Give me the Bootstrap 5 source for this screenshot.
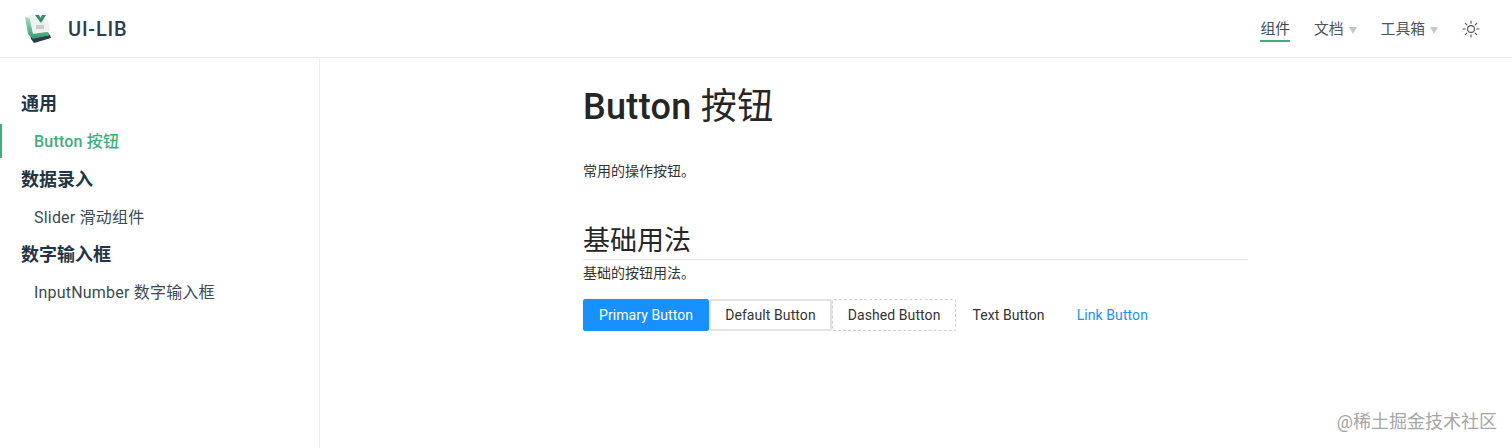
<!doctype html>
<html lang="zh">
<head>
<meta charset="utf-8">
<title>UI-LIB</title>
<link href="https://cdn.jsdelivr.net/npm/bootstrap@5.3.0/dist/css/bootstrap.min.css" rel="stylesheet">
<style>
html,body{height:448px;overflow:hidden;background:#fff;}
body{font-family:Roboto,"Noto Sans CJK SC",sans-serif;color:#213547;position:relative;}
.topbar{height:58px;border-bottom:1px solid #eeeeee;padding:0 32px 0 24px;}
.brand-name{font-size:20px;font-weight:500;color:#2c3e50;margin-left:16px;letter-spacing:.8px;}
.menu-item{font-size:14.8px;color:#4a5560;height:26px;line-height:24px;padding-top:1px;}
.menu-active{border-bottom:2px solid #3eaf7c;color:#3c4a55;}
.caret{display:inline-block;width:0;height:0;border-left:4.5px solid transparent;border-right:4.5px solid transparent;border-top:7px solid #c4c7ca;margin-left:5px;vertical-align:0;}
.shell{height:390px;}
.side{width:320px;border-right:1px solid #eeeeee;padding-top:28px;flex:none;letter-spacing:.2px;}
.side-head{font-size:18px;font-weight:700;height:38px;line-height:36px;padding-left:21px;color:#213547;letter-spacing:0;}
.side-link{font-size:16px;height:37px;line-height:36px;padding-left:34px;color:#3c4a55;}
.side-on{color:#3eaf7c;font-weight:500;box-shadow:inset 2px 0 0 #3eaf7c;height:34px;line-height:36px;margin-bottom:4px;}
.doc{width:665px;margin-left:263px;color:#262626;}
.doc-title{font-size:36px;font-weight:500;line-height:44px;margin:27px 0 0;color:#262626;letter-spacing:.3px;}
.doc-title-cjk{font-weight:400;}
.doc-lead{font-size:14px;line-height:22px;margin:31px 0 0;color:#333;}
.doc-sub{font-size:27px;font-weight:400;line-height:38px;margin:40px 0 0;height:38px;border-bottom:1px solid #e6e6e6;color:#262626;}
.doc-note{font-size:14px;line-height:22px;margin:2px 0 0;color:#333;}
.btn-row{margin-top:15px;}
.demo-btn{font-size:14px;height:32px;line-height:30px;padding:0 15px;border:1px solid transparent;border-radius:2px;background:transparent;color:#333;white-space:nowrap;letter-spacing:.08px;}
.demo-primary{background:#1890ff;border-color:#1890ff;color:#fff;}
.demo-default{background:#fff;border:2px solid #e2e2e2;border-radius:2px;line-height:28px;padding:0 14px;}
.demo-dashed{background:#fff;border:1px dashed #cfcfcf;}
.demo-link{color:#1890ff;}
.stamp{position:absolute;right:15px;bottom:14px;font-size:18px;line-height:24px;color:#a6a6a6;}
</style>
</head>
<body>
<header class="topbar d-flex align-items-center justify-content-between">
  <div class="d-flex align-items-center">
    <svg width="28" height="30" viewBox="0 0 28 30" aria-hidden="true">
      <defs>
        <linearGradient id="bookEdge" x1="0" y1="0" x2="0" y2="1">
          <stop offset="0" stop-color="#a8e0c4"/>
          <stop offset="1" stop-color="#2f9a6c"/>
        </linearGradient>
      </defs>
      <path d="M3 6 L7 25 L10 29 L27 24 L26 21 L9 24 Z" fill="#2b3a4d"/>
      <path d="M1 3 L4 20 L9 25 L26 21 L24 18 L9 19 L6 4 Z" fill="url(#bookEdge)"/>
      <path d="M5 1 L9 20 L26 17 L24 6 L17 1 Z" fill="#eef1ef"/>
      <path d="M11 1 L15 1 L16.5 4 L18 1 L22 1 L17 9 Z" fill="#2f8f68"/>
      <rect x="12" y="11" width="8" height="4" fill="#c6cdc9"/>
    </svg>
    <span class="brand-name">UI-LIB</span>
  </div>
  <nav class="d-flex align-items-center">
    <span class="menu-item menu-active">组件</span>
    <span class="menu-item ms-4">文档<i class="caret"></i></span>
    <span class="menu-item ms-4">工具箱<i class="caret"></i></span>
    <svg class="ms-4" width="18" height="18" viewBox="0 0 18 18" fill="none" stroke="#4a5560" stroke-width="1.1" stroke-linecap="round" aria-hidden="true">
      <circle cx="9" cy="9" r="3.4"/>
      <path d="M9 1v2.2M9 14.8V17M1 9h2.2M14.8 9H17M3.3 3.3l1.6 1.6M13.1 13.1l1.6 1.6M3.3 14.7l1.6-1.6M13.1 4.9l1.6-1.6"/>
    </svg>
  </nav>
</header>
<div class="shell d-flex">
  <aside class="side">
    <div class="side-head">通用</div>
    <div class="side-link side-on">Button 按钮</div>
    <div class="side-head">数据录入</div>
    <div class="side-link">Slider 滑动组件</div>
    <div class="side-head">数字输入框</div>
    <div class="side-link">InputNumber 数字输入框</div>
  </aside>
  <main class="doc">
    <h1 class="doc-title">Button <span class="doc-title-cjk">按钮</span></h1>
    <p class="doc-lead">常用的操作按钮。</p>
    <h2 class="doc-sub">基础用法</h2>
    <p class="doc-note">基础的按钮用法。</p>
    <div class="btn-row d-flex">
      <button type="button" class="demo-btn demo-primary">Primary Button</button>
      <button type="button" class="demo-btn demo-default">Default Button</button>
      <button type="button" class="demo-btn demo-dashed">Dashed Button</button>
      <button type="button" class="demo-btn">Text Button</button>
      <button type="button" class="demo-btn demo-link">Link Button</button>
    </div>
  </main>
</div>
<div class="stamp">@稀土掘金技术社区</div>
<script src="https://cdn.jsdelivr.net/npm/bootstrap@5.3.0/dist/js/bootstrap.bundle.min.js"></script>
</body>
</html>
